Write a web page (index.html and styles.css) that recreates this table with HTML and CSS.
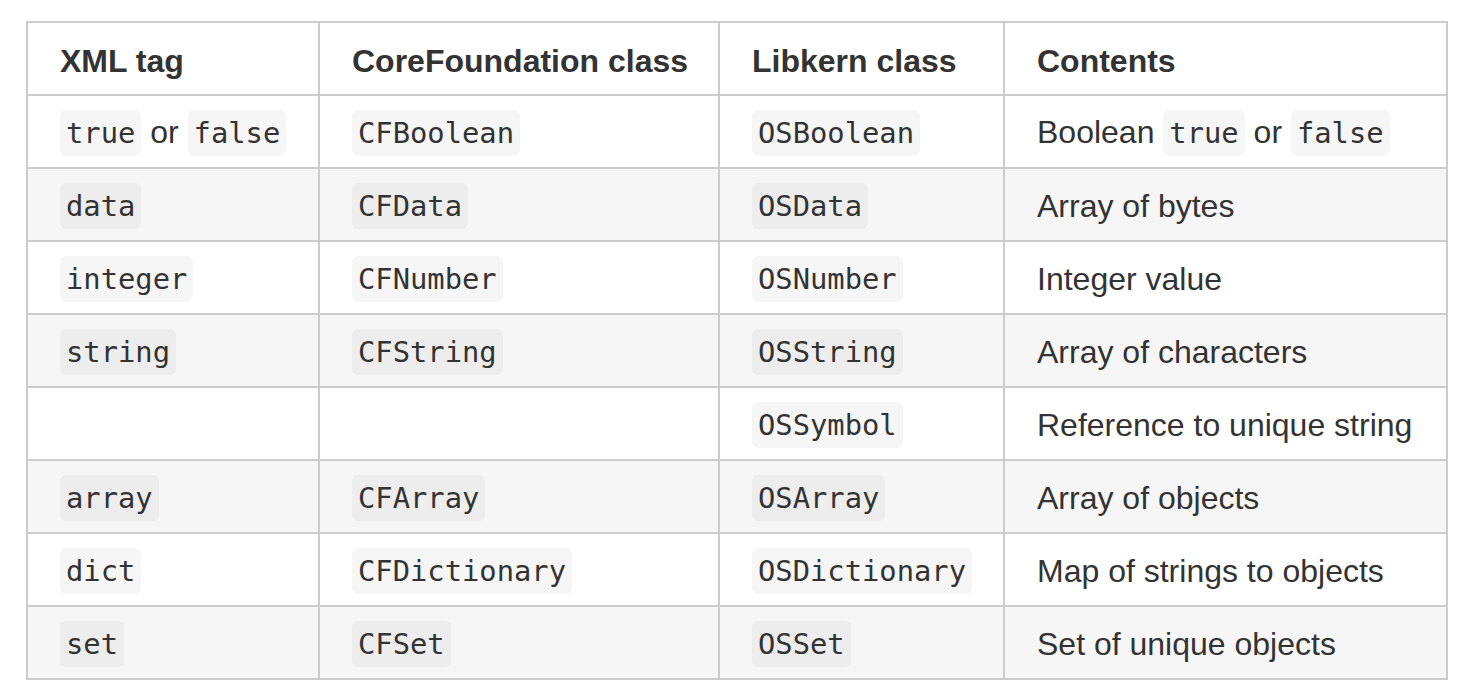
FILE: index.html
```html
<!DOCTYPE html>
<html>
<head>
<meta charset="utf-8">
<link rel="stylesheet" href="styles.css">
</head>
<body>
<div class="page">
<table class="types">
  <colgroup>
    <col class="c1"><col class="c2"><col class="c3"><col class="c4">
  </colgroup>
  <thead>
    <tr><th>XML tag</th><th>CoreFoundation class</th><th>Libkern class</th><th>Contents</th></tr>
  </thead>
  <tbody>
    <tr><td><code>true</code> or <code>false</code></td><td><code>CFBoolean</code></td><td><code>OSBoolean</code></td><td>Boolean <code>true</code> or <code>false</code></td></tr>
    <tr><td><code>data</code></td><td><code>CFData</code></td><td><code>OSData</code></td><td>Array of bytes</td></tr>
    <tr><td><code>integer</code></td><td><code>CFNumber</code></td><td><code>OSNumber</code></td><td>Integer value</td></tr>
    <tr><td><code>string</code></td><td><code>CFString</code></td><td><code>OSString</code></td><td>Array of characters</td></tr>
    <tr><td></td><td></td><td><code>OSSymbol</code></td><td>Reference to unique string</td></tr>
    <tr><td><code>array</code></td><td><code>CFArray</code></td><td><code>OSArray</code></td><td>Array of objects</td></tr>
    <tr><td><code>dict</code></td><td><code>CFDictionary</code></td><td><code>OSDictionary</code></td><td>Map of strings to objects</td></tr>
    <tr><td><code>set</code></td><td><code>CFSet</code></td><td><code>OSSet</code></td><td>Set of unique objects</td></tr>
  </tbody>
</table>
</div>
</body>
</html>
```

FILE: styles.css
```css
html, body {
  margin: 0;
  padding: 0;
  background: #ffffff;
}
.page {
  padding: 21px 26px;
  font-family: "Liberation Sans", Arial, Helvetica, sans-serif;
  font-size: 32px;
  color: #333333;
}
.types {
  border-collapse: collapse;
  table-layout: fixed;
  width: 1420px;
}
.c1 { width: 292px; }
.c2 { width: 400px; }
.c3 { width: 285px; }
.c4 { width: 443px; }
.types th,
.types td {
  border: 2px solid #cccccc;
  padding: 11px 32px 9px;
  line-height: 50px;
  height: 50px;
  text-align: left;
  vertical-align: middle;
  white-space: nowrap;
}
.types th {
  font-weight: bold;
  padding: 13px 32px 8px;
}
.types tbody tr:nth-child(even) {
  background: #f6f6f6;
}
.types code {
  font-family: "DejaVu Sans Mono", "Liberation Mono", monospace;
  font-size: 28.8px;
  padding: 6px 6px;
  border-radius: 6px;
  background: rgba(0, 0, 0, 0.035);
}
```
